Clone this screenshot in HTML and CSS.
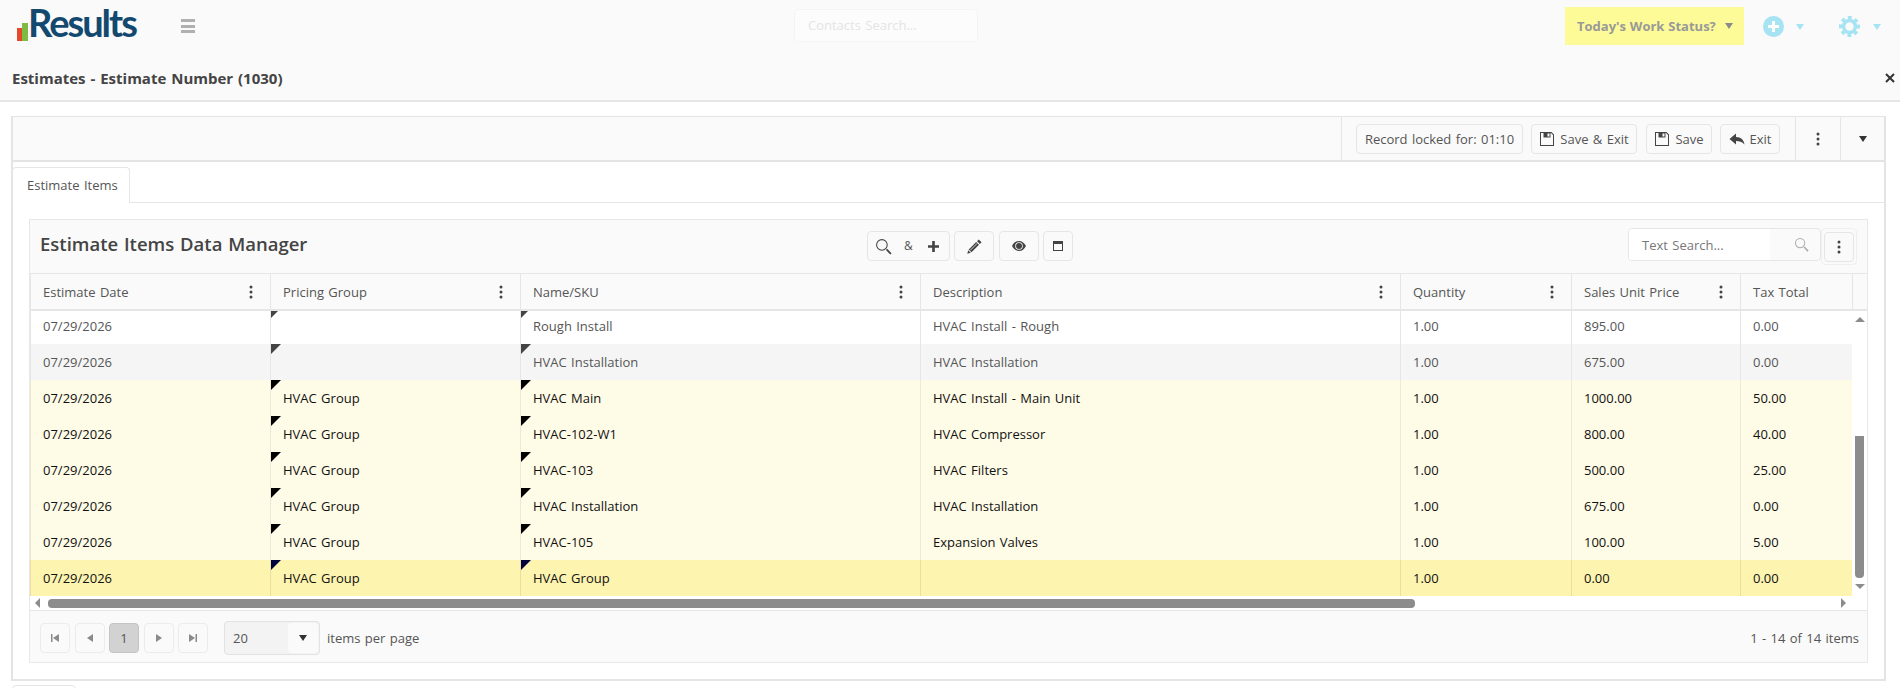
FILE: index.html
```html
<!DOCTYPE html>
<html lang="en">
<head>
<meta charset="utf-8">
<title>Estimates - Estimate Number (1030)</title>
<link rel="stylesheet" href="styles.css">
</head>
<body>
<svg class="defs" width="0" height="0" aria-hidden="true">
  <symbol id="i-kebab" viewBox="0 0 4 14"><circle cx="2" cy="2" r="1.5"/><circle cx="2" cy="7" r="1.5"/><circle cx="2" cy="12" r="1.5"/></symbol>
  <symbol id="i-floppy" viewBox="0 0 16 16"><path d="M1 1h11.5L15 3.5V15H1zM2 2v12h12V4l-2-2h-.5v4.500h-7V2z" fill-rule="evenodd"/><path d="M8.500 2.500H10.500V5.500H8.500z" fill="#fafafa"/></symbol>
  <symbol id="i-search" viewBox="0 0 16 16"><path d="M6.500 1a5.500 5.500 0 1 1 0 11 5.500 5.500 0 0 1 0-11zm0 1a4.500 4.500 0 1 0 0 9 4.500 4.500 0 0 0 0-9z" fill-rule="evenodd"/><path d="M10.300 11.300l1.100-1.100 4.200 4.200-1.300 1.200z"/></symbol>
</svg>

<header class="top">
  <nav class="nav">
    <a class="logo"><span class="bar bar-red"></span><span class="bar bar-green"></span><span class="logo-text">Results</span></a>
    <span class="burger"><i></i><i></i><i></i></span>
    <div class="contacts">Contacts Search...</div>
    <div class="status">Today's Work Status?<span class="caret caret-grey"></span></div>
    <div class="nav-icon">
      <svg width="21" height="21" viewBox="0 0 21 21"><circle cx="10.500" cy="10.500" r="10.500" fill="#a6e3f3"/><path d="M9 5h3v4h4v3h-4v4H9v-4H5V9h4z" fill="#fff"/></svg>
      <span class="caret caret-blue"></span>
    </div>
    <div class="nav-icon nav-gear">
      <svg width="21" height="21" viewBox="0 0 21 21"><circle cx="10.500" cy="10.500" r="8.500" fill="none" stroke="#a6e3f3" stroke-width="4" stroke-dasharray="3.600 3.075" transform="rotate(-12 10.500 10.500)"/><circle cx="10.500" cy="10.500" r="6" fill="none" stroke="#a6e3f3" stroke-width="3.500"/></svg>
      <span class="caret caret-blue"></span>
    </div>
  </nav>
  <div class="title-row">
    <h1>Estimates - Estimate Number (1030)</h1>
    <svg class="close" width="10" height="10" viewBox="0 0 10 10"><path d="M1 1l8 8M9 1L1 9" stroke="#333" stroke-width="2"/></svg>
  </div>
</header>

<main class="panel">
  <div class="toolbar">
    <div class="tb-group">
      <span class="btn btn-lock">Record locked for: 01:10</span>
      <span class="btn btn-se"><svg class="ico"><use href="#i-floppy"/></svg>Save &amp; Exit</span>
      <span class="btn btn-s"><svg class="ico"><use href="#i-floppy"/></svg>Save</span>
      <span class="btn btn-x"><svg class="ico" viewBox="0 0 16 16"><path d="M7 2.500L.5 8 7 13.500V10c3.500 0 6 .8 8.500 3.500C15 9 12 6 7 6z"/></svg>Exit</span>
    </div>
    <div class="tb-cell"><svg class="kebab"><use href="#i-kebab"/></svg></div>
    <div class="tb-cell tb-last"><span class="caret caret-dark"></span></div>
  </div>

  <div class="tabs"><span class="tab">Estimate Items</span></div>

  <section class="box">
    <div class="box-head">
      <h2>Estimate Items Data Manager</h2>
      <div class="tools">
        <span class="tool tool-add">
          <svg class="ico-lg" viewBox="0 0 16 16"><use href="#i-search"/></svg>
          <span class="amp">&amp;</span>
          <svg width="11" height="11" viewBox="0 0 10 10"><path d="M3.800 0h2.400v3.800H10v2.400H6.200V10H3.800V6.200H0V3.800h3.800z"/></svg>
        </span>
        <span class="tool tool-w"><svg width="15" height="15" viewBox="0 0 16 16"><path d="M12.500.5l3 3-1.800 1.800-3-3zM9.800 3.200l3 3-8 8-3-3zM1.300 12l2.700 2.700-3.700 1z"/><path d="M10.800 4.700l-7.500 7.500" stroke="#fafafa" stroke-width=".8"/></svg></span>
        <span class="tool tool-w tool-eye"><svg width="14" height="10" viewBox="0 0 14 10"><path d="M7 0c3 0 5.500 2 7 5-1.500 3-4 5-7 5S1.500 8 0 5c1.500-3 4-5 7-5zm0 1.200A3.800 3.800 0 1 0 7 8.800 3.800 3.800 0 0 0 7 1.200z" fill-rule="evenodd"/><circle cx="7" cy="5" r="3"/></svg></span>
        <span class="tool tool-n"><svg width="10" height="10" viewBox="0 0 10 10"><path d="M0 0h10v10H0zM1 3v6h8V3z" fill-rule="evenodd"/></svg></span>
      </div>
      <div class="search">
        <span class="search-text">Text Search...</span>
        <span class="search-ico"><svg width="15" height="15" viewBox="0 0 16 16"><use href="#i-search"/></svg></span>
      </div>
      <div class="menu-wrap"><span class="menu-btn"><svg class="kebab"><use href="#i-kebab"/></svg></span></div>
    </div>

    <div class="grid-head">
      <div class="hcell"><span>Estimate Date</span><svg class="kebab"><use href="#i-kebab"/></svg></div>
      <div class="hcell"><span>Pricing Group</span><svg class="kebab"><use href="#i-kebab"/></svg></div>
      <div class="hcell"><span>Name/SKU</span><svg class="kebab"><use href="#i-kebab"/></svg></div>
      <div class="hcell"><span>Description</span><svg class="kebab"><use href="#i-kebab"/></svg></div>
      <div class="hcell"><span>Quantity</span><svg class="kebab"><use href="#i-kebab"/></svg></div>
      <div class="hcell"><span>Sales Unit Price</span><svg class="kebab"><use href="#i-kebab"/></svg></div>
      <div class="hcell"><span>Tax Total</span></div>
      <div class="hcell"></div>
    </div>

    <div class="grid-body">
      <div class="rows">
        <div class="row-list">
          <div class="row"><div>07/29/2026</div><div class="note"></div><div class="note">Rough Install</div><div>HVAC Install - Rough</div><div>1.00</div><div>895.00</div><div>0.00</div></div>
          <div class="row row-alt"><div>07/29/2026</div><div class="note"></div><div class="note">HVAC Installation</div><div>HVAC Installation</div><div>1.00</div><div>675.00</div><div>0.00</div></div>
          <div class="row row-y"><div>07/29/2026</div><div class="note">HVAC Group</div><div class="note">HVAC Main</div><div>HVAC Install - Main Unit</div><div>1.00</div><div>1000.00</div><div>50.00</div></div>
          <div class="row row-y"><div>07/29/2026</div><div class="note">HVAC Group</div><div class="note">HVAC-102-W1</div><div>HVAC Compressor</div><div>1.00</div><div>800.00</div><div>40.00</div></div>
          <div class="row row-y"><div>07/29/2026</div><div class="note">HVAC Group</div><div class="note">HVAC-103</div><div>HVAC Filters</div><div>1.00</div><div>500.00</div><div>25.00</div></div>
          <div class="row row-y"><div>07/29/2026</div><div class="note">HVAC Group</div><div class="note">HVAC Installation</div><div>HVAC Installation</div><div>1.00</div><div>675.00</div><div>0.00</div></div>
          <div class="row row-y"><div>07/29/2026</div><div class="note">HVAC Group</div><div class="note">HVAC-105</div><div>Expansion Valves</div><div>1.00</div><div>100.00</div><div>5.00</div></div>
          <div class="row row-sel"><div>07/29/2026</div><div class="note">HVAC Group</div><div class="note">HVAC Group</div><div></div><div>1.00</div><div>0.00</div><div>0.00</div></div>
        </div>
      </div>
      <div class="vscroll">
        <span class="arrow arrow-up"></span>
        <span class="vthumb"></span>
        <span class="arrow arrow-down"></span>
      </div>
    </div>

    <div class="hscroll">
      <span class="arrow arrow-left"></span>
      <span class="hthumb"></span>
      <span class="arrow arrow-right"></span>
    </div>

    <div class="pager">
      <span class="pg"><svg width="8" height="8" viewBox="0 0 8 8"><path d="M0 0h1.500v8H0zM8 0v8L2 4z"/></svg></span>
      <span class="pg"><svg width="6" height="8" viewBox="0 0 6 8"><path d="M6 0v8L0 4z"/></svg></span>
      <span class="pg pg-on">1</span>
      <span class="pg"><svg width="6" height="8" viewBox="0 0 6 8"><path d="M0 0v8l6-4z"/></svg></span>
      <span class="pg"><svg width="8" height="8" viewBox="0 0 8 8"><path d="M0 0v8l6-4zM6.500 0H8v8H6.500z"/></svg></span>
      <span class="size"><span class="size-val">20</span><span class="size-btn"><span class="caret caret-dark"></span></span></span>
      <span class="per">items per page</span>
      <span class="count">1 - 14 of 14 items</span>
    </div>
  </section>
</main>
<div class="stub"></div>
</body>
</html>
```
FILE: styles.css
```css
* { box-sizing: border-box; }
html, body { height: 688px; overflow: hidden; }
body { margin: 0; background: #fff; color: #555; font: 13px/18px "Open Sans", "Noto Sans", sans-serif; word-spacing: 1px; }
.defs { position: absolute; }
h1, h2 { margin: 0; }

/* carets */
.caret { display: inline-block; width: 0; height: 0; border-left: 4px solid transparent; border-right: 4px solid transparent; border-top: 6px solid #999; }
.caret-grey { border-top-color: #8a8a8a; margin-left: 9px; position: relative; top: -2px; }
.caret-blue { border-top-color: #a6e3f3; }
.caret-dark { border-top-color: #333; }

/* top header */
.top { height: 102px; background: #fafafa; border-bottom: 2px solid #e6e6e6; }
.nav { height: 55px; display: flex; align-items: flex-start; }
.logo { display: flex; align-items: flex-end; height: 41px; margin: 0 0 0 17px; width: 164px; }
.bar { display: block; width: 5px; }
.bar-red { height: 13px; background: #e5492c; }
.bar-green { height: 18px; background: #7fbb42; width: 6px; }
.logo-text { font: 700 38px/44px Lato, "Open Sans", sans-serif; color: #14496f; letter-spacing: -2px; height: 41px; margin-top: -3px; word-spacing: 0; }
.burger { display: flex; flex-direction: column; gap: 2.500px; margin-top: 19px; width: 14px; }
.burger i { display: block; height: 3px; background: #b0b0b0; }
.contacts { margin: 9px 0 0 599px; width: 184px; height: 33px; padding: 6px 13px; background: #fcfcfc; border: 1px solid #f4f4f4; border-radius: 4px; color: #e4e4e4; }
.status { margin: 7px 0 0 587px; width: 179px; height: 38px; padding: 0 11px 0 12px; background: #fdfb97; color: #999; font-weight: 700; line-height: 38px; white-space: nowrap; word-spacing: .5px; }
.nav-icon { display: flex; align-items: center; gap: 12px; margin: 16px 0 0 19px; height: 21px; }
.nav-gear { margin-left: 35px; gap: 13px; }
.title-row { height: 45px; display: flex; align-items: center; justify-content: space-between; padding: 0 5px 0 12px; }
h1 { font-size: 15px; font-weight: 700; color: #444; }

/* panel */
.panel { margin: 14px 14px 0 11px; height: 565px; border: 2px solid #e4e4e4; border-top-width: 1px; }
.toolbar { height: 45px; display: flex; justify-content: flex-end; background: #fafafa; border-bottom: 2px solid #e4e4e4; }
.tb-group { display: flex; align-items: center; gap: 8px; padding: 0 15px 0 14px; border-left: 1px solid #e6e6e6; }
.btn { display: flex; align-items: center; justify-content: center; gap: 5px; height: 30px; border: 1px solid #e6e6e6; border-radius: 4px; background: #fafafa; white-space: nowrap; }
.btn-lock { width: 167px; }
.btn-se { width: 106px; }
.btn-s { width: 66px; margin-left: 1px; }
.btn-x { width: 60px; }
.ico { width: 16px; height: 16px; fill: #444; }
.tb-cell { width: 45px; display: flex; align-items: center; justify-content: center; border-left: 1px solid #e6e6e6; }
.tb-last { width: 44px; }
.kebab { width: 4px; height: 14px; fill: #444; }

.tabs { height: 41px; padding-top: 5px; border-bottom: 1px solid #e6e6e6; }
.tab { display: inline-block; height: 36px; width: 118px; padding: 8px 0 0 14px; border: 1px solid #e6e6e6; border-bottom: 0; border-radius: 4px 4px 0 0; background: #fff; margin-left: -1px; }

/* data box */
.box { margin: 16px 16px 0 16px; height: 444px; border: 1px solid #e8e8e8; background: #fafafa; }
.box-head { height: 54px; display: flex; align-items: flex-start; border-bottom: 1px solid #e6e6e6; }
h2 { font-size: 18.500px; line-height: 24px; font-weight: 600; color: #444; margin: 12px 0 0 10px; width: 827px; white-space: nowrap; }
.tools { display: flex; gap: 4px; margin-top: 11px; }
.tool { display: flex; align-items: center; justify-content: center; height: 30px; border: 1px solid #e6e6e6; border-radius: 4px; fill: #444; }
.tool-add { width: 83px; justify-content: flex-start; padding-left: 7px; gap: 12px; }
.ico-lg { width: 17px; height: 17px; }
.amp { font-size: 12px; color: #555; margin-right: 3px; }
.tool-w { width: 40px; }
.tool-eye { margin-left: 1px; }
.tool-n { width: 30px; }
.search { display: flex; width: 193px; height: 33px; margin: 8px 0 0 auto; border: 1px solid #e6e6e6; border-radius: 4px; overflow: hidden; }
.search-text { flex: 1; padding: 7px 13px; background: #fff; color: #777; }
.search-ico { width: 50px; display: flex; align-items: center; justify-content: flex-end; padding-right: 11px; fill: #aaa; }
.menu-wrap { width: 36px; height: 37px; margin: 8px 10px 0 0; padding: 3px 2px; border: 1px solid #efefef; border-radius: 4px; }
.menu-btn { display: flex; align-items: center; justify-content: center; width: 30px; height: 30px; border: 1px solid #e6e6e6; border-radius: 4px; }

/* grid */
.grid-head { display: grid; grid-template-columns: 240px 250px 400px 480px 171px 169px 112px 1fr; height: 37px; border-bottom: 2px solid #e6e6e6; }
.hcell { display: flex; align-items: center; justify-content: space-between; padding: 0 17px 0 12px; border-left: 1px solid #e6e6e6; white-space: nowrap; }
.grid-body { display: flex; height: 285px; background: #fff; }
.rows { flex: 1; overflow: hidden; }
.row-list { margin-top: -3px; }
.row { display: grid; grid-template-columns: 240px 250px 400px 480px 171px 169px 112px; height: 36px; background: #fff; }
.row > div { position: relative; padding: 9px 0 0 12px; border-left: 1px solid #e6e6e6; white-space: nowrap; }
.row-alt { background: #f5f5f5; }
.row-y { background: #fefbe6; color: #111; }
.row-y > div { border-left-color: #eee9d4; }
.row-sel { background: #fdf4b0; color: #111; }
.row-sel > div { border-left-color: #eadfa0; }
.note::before { content: ""; position: absolute; left: 0; top: 0; border-top: 10px solid #444; border-right: 10px solid transparent; }
.row-y .note::before { border-top-color: #000; }
.row-sel .note::before { border-top-color: #00003c; }

.vscroll { width: 15px; display: flex; flex-direction: column; align-items: center; }
.arrow { display: block; width: 0; height: 0; }
.arrow-up { border-left: 5px solid transparent; border-right: 5px solid transparent; border-bottom: 5px solid #8c8c8c; margin-top: 6px; }
.vthumb { width: 9px; height: 142px; margin-top: 114px; background: #8c8c8c; border-radius: 0 0 4px 4px; }
.arrow-down { border-left: 5px solid transparent; border-right: 5px solid transparent; border-top: 5px solid #8c8c8c; margin-top: 6px; }
.hscroll { display: flex; align-items: center; height: 15px; padding-left: 5px; background: #fff; border-bottom: 1px solid #e6e6e6; }
.arrow-left { border-top: 5px solid transparent; border-bottom: 5px solid transparent; border-right: 5px solid #8c8c8c; }
.hthumb { width: 1367px; height: 9px; margin-left: 8px; background: #8c8c8c; border-radius: 4px; }
.arrow-right { border-top: 5px solid transparent; border-bottom: 5px solid transparent; border-left: 5px solid #8c8c8c; margin-left: auto; margin-right: 21px; }

.pager { display: flex; align-items: center; height: 51px; padding: 2px 8px 0 10px; gap: 4px; }
.pg { display: flex; align-items: center; justify-content: center; width: 30px; height: 30px; border: 1px solid #ececec; border-radius: 4px; fill: #8a8a8a; }
.pg:nth-child(even) { margin-left: 1px; }
.pg-on { background: #d2d2d2; border-color: #c4c4c4; color: #555; }
.size { display: flex; align-items: center; width: 96px; height: 34px; margin-left: 12px; background: #f3f3f3; border: 1px solid #e2e2e2; border-radius: 4px; }
.size-val { flex: 1; padding-left: 8px; }
.size-btn { display: flex; align-items: center; justify-content: center; width: 30px; height: 30px; margin-right: 1px; background: #fafafa; border-radius: 4px; }
.per { margin-left: 3px; }
.count { margin-left: auto; }

.stub { width: 64px; height: 10px; margin: 4px 0 0 12px; border: 1px solid #e6e6e6; border-radius: 4px; }
```
